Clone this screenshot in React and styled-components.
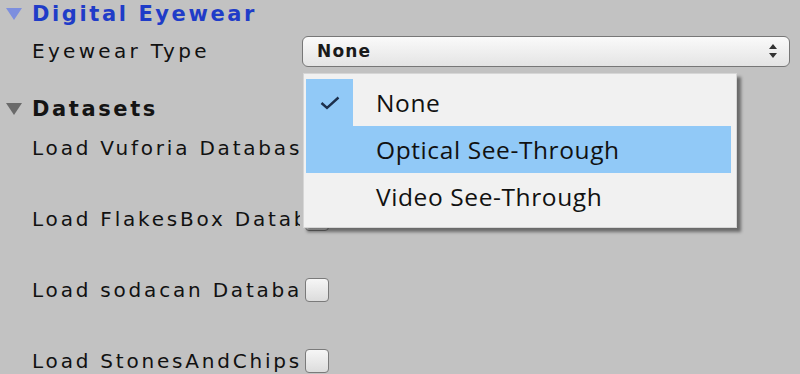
import styled, { createGlobalStyle } from 'styled-components';

const GlobalStyle = createGlobalStyle`
    body {
        margin: 0;
        background: #c2c2c2;
        font-family: 'DejaVu Sans', Verdana, sans-serif;
        color: #111;
    }
`;

const Inspector = styled.div`
    position: relative;
    width: 800px;
    height: 374px;
    overflow: hidden;
    background: #c2c2c2;
`;

const Foldout = styled.div`
    display: flex;
    align-items: center;
    height: 28px;
    margin-top: ${(p) => p.top || 0}px;
    padding-left: 6px;
    gap: 10px;
    font-size: 21px;
    font-weight: bold;
    letter-spacing: 2.6px;
    color: ${(p) => (p.active ? '#1f3cc8' : '#141414')};
`;

const Arrow = styled.span`
    width: 0;
    height: 0;
    border-left: 8px solid transparent;
    border-right: 8px solid transparent;
    border-top: 12px solid ${(p) => (p.active ? '#7d8fde' : '#6a6a6a')};
`;

const PropRow = styled.div`
    display: flex;
    align-items: center;
    height: 30px;
    margin-top: ${(p) => p.top || 0}px;
`;

const Label = styled.div`
    width: ${(p) => p.width}px;
    margin-left: 32px;
    flex-shrink: 0;
    overflow: hidden;
    white-space: nowrap;
    font-size: 20px;
    letter-spacing: ${(p) => p.spacing || 2.8}px;
`;

const Popup = styled.div`
    display: flex;
    align-items: center;
    justify-content: space-between;
    width: 488px;
    height: 31px;
    box-sizing: border-box;
    padding: 0 12px 0 14px;
    border: 1.5px solid #777;
    border-radius: 6px;
    background: linear-gradient(#fafafa, #e4e4e4);
    font-size: 17px;
    font-weight: bold;
    letter-spacing: 1.2px;
    color: #1a1a1a;
`;

const Checkbox = styled.div`
    width: 24px;
    height: 24px;
    margin-left: 5px;
    box-sizing: border-box;
    border: 1.5px solid #7a7a7a;
    border-radius: 4px;
    background: linear-gradient(#f6f6f6, #dcdcdc);
`;

const Menu = styled.div`
    position: absolute;
    left: 303px;
    top: 73px;
    width: 434px;
    box-sizing: border-box;
    padding: 5px 5px 7px 2px;
    background: #f1f1f1;
    border: 1px solid #d6d6d6;
    box-shadow: 4px 4px 3px rgba(0, 0, 0, 0.45);
    font-family: 'Open Sans', 'Noto Sans', sans-serif;
`;

const Item = styled.div`
    display: flex;
    align-items: center;
    height: 47px;
    background: ${(p) => (p.hover ? '#91c9f7' : 'transparent')};
    font-size: 24.5px;
    letter-spacing: 0.6px;
    color: #111;
`;

const Check = styled.div`
    display: flex;
    align-items: center;
    justify-content: center;
    width: 47px;
    height: 100%;
    margin-right: 23px;
    background: ${(p) => (p.on ? '#91c9f7' : 'transparent')};
`;

const UpDown = () => (
    <svg width="8" height="14" viewBox="0 0 8 14">
        <path d="M4 0 L8 5 L0 5 Z M4 14 L8 9 L0 9 Z" fill="#333" />
    </svg>
);

const Tick = () => (
    <svg width="20" height="14" viewBox="0 0 20 14">
        <path d="M1.5 7 L7 12 L18.5 1.5" fill="none" stroke="#1c2f4c" strokeWidth="2.4" />
    </svg>
);

const datasets = ['Load Vuforia Database', 'Load FlakesBox Database', 'Load sodacan Database', 'Load StonesAndChips'];

const options = ['None', 'Optical See-Through', 'Video See-Through'];

export default function App() {
    return (
        <Inspector>
            <GlobalStyle />
            <Foldout active>
                <Arrow active />
                Digital Eyewear
            </Foldout>
            <PropRow top={8}>
                <Label width={270} spacing={3.3}>
                    Eyewear Type
                </Label>
                <Popup>
                    None
                    <UpDown />
                </Popup>
            </PropRow>
            <Foldout top={29}>
                <Arrow />
                Datasets
            </Foldout>
            {datasets.map((name, i) => (
                <PropRow key={name} top={i === 0 ? 10 : 41}>
                    <Label width={268}>{name}</Label>
                    <Checkbox />
                </PropRow>
            ))}
            <Menu>
                {options.map((opt, i) => (
                    <Item key={opt} hover={i === 1}>
                        <Check on={i === 0}>{i === 0 && <Tick />}</Check>
                        {opt}
                    </Item>
                ))}
            </Menu>
        </Inspector>
    );
}
